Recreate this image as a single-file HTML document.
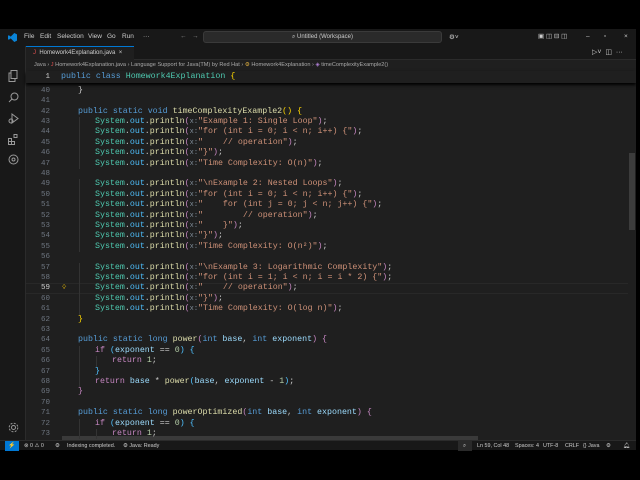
<!DOCTYPE html>
<html><head><meta charset="utf-8"><style>
*{margin:0;padding:0;box-sizing:border-box}
body{width:640px;height:480px;background:#000;overflow:hidden;position:relative;font-family:"Liberation Sans",sans-serif;color:#ccc}
.abs{position:absolute}
#win{position:absolute;left:0;top:29px;width:636px;height:421px;background:#1f1f1f;overflow:hidden}
#title{position:absolute;left:0;top:0;width:636px;height:17px;background:#181818;font-size:6.5px;color:#ccc}
#title span{position:absolute;top:4px}
#tabs{position:absolute;left:26px;top:17px;width:610px;height:14px;background:#181818;border-bottom:1px solid #2b2b2b}
#act{position:absolute;left:0;top:17px;width:26px;height:394px;background:#181818;border-right:1px solid #2b2b2b}
#crumb{position:absolute;left:26px;top:31px;width:610px;height:12px;font-size:5.6px;color:#a9a9a9}
.code{font-family:"Liberation Mono",monospace;font-size:8.3px;white-space:pre;position:absolute;left:0;height:10.4px;line-height:10.4px}
.ln{position:absolute;width:24px;left:26px;text-align:right;font-family:"Liberation Mono",monospace;font-size:7.5px;color:#6e7681;height:10.4px;line-height:10.4px}
.k{color:#569cd6}.f{color:#dcdcaa}.c{color:#4ec9b0}.s{color:#ce9178}.v{color:#9cdcfe}.o{color:#4fc1ff}.n{color:#b5cea8}.p{color:#c586c0}.h{color:#7f8c98;font-size:7px}.t{color:#ccc}.y{color:#ffd700}
#status{position:absolute;left:0;top:411px;width:636px;height:10px;background:#181818;border-top:1px solid #2b2b2b;font-size:5.4px;color:#ccc}
#status span{position:absolute;top:2px}
</style></head><body>
<div id="win">
<div id="title">
 <svg class="abs" style="left:8px;top:4px" width="9" height="9" viewBox="0 0 10 10"><path d="M7 0L3 4 1 2.5 0 3v4l1 .5L3 6l4 4 3-1.5v-7z" fill="#0a84d8"/></svg>
 <span style="left:24px">File</span><span style="left:40px">Edit</span><span style="left:57px">Selection</span><span style="left:88px">View</span><span style="left:107px">Go</span><span style="left:122px">Run</span><span style="left:143px">···</span>
 <span style="left:180px;color:#888">←</span><span style="left:192px;color:#888">→</span>
 <div class="abs" style="left:203px;top:2px;width:239px;height:12px;background:#2a2a2a;border:1px solid #3a3a3a;border-radius:3px;text-align:center;line-height:10px;font-size:6px">⌕ Untitled (Workspace)</div>
 <span style="left:449px">⚙˅</span>
 <span style="left:538px;top:3px">▣ ◫ ⊟ ◫</span>
 <span style="left:586px">–</span><span style="left:604px">▫</span><span style="left:624px">×</span>
</div>
<div id="act">
 <svg class="abs" style="left:8px;top:24px" width="11" height="12" viewBox="0 0 11 12" fill="none" stroke="#999" stroke-width="1"><rect x="3" y="0.5" width="6" height="8"/><path d="M3 3H1v8.5h6V8.5"/></svg>
 <svg class="abs" style="left:8px;top:46px" width="11" height="11" viewBox="0 0 11 11" fill="none" stroke="#999" stroke-width="1"><circle cx="6.5" cy="4.5" r="3.5"/><path d="M4 7L1 10"/></svg>
 <svg class="abs" style="left:8px;top:67px" width="11" height="11" viewBox="0 0 11 11" fill="none" stroke="#999" stroke-width="1"><path d="M4 1l6 4.5-6 4.5z"/><circle cx="3" cy="8" r="2"/></svg>
 <svg class="abs" style="left:8px;top:88px" width="11" height="11" viewBox="0 0 11 11" fill="none" stroke="#999" stroke-width="1"><rect x=".5" y="4.5" width="3" height="3"/><rect x=".5" y="7.5" width="3" height="3"/><rect x="3.5" y="7.5" width="3" height="3"/><rect x="6" y=".5" width="3" height="3"/></svg>
 <svg class="abs" style="left:8px;top:108px" width="11" height="11" viewBox="0 0 11 11" fill="none" stroke="#999" stroke-width="1"><circle cx="5.5" cy="5.5" r="4.5"/><circle cx="5.5" cy="5.5" r="1.5"/></svg>
 <svg class="abs" style="left:8px;top:376px" width="11" height="11" viewBox="0 0 11 11" fill="none" stroke="#999" stroke-width="1"><circle cx="5.5" cy="5.5" r="2"/><circle cx="5.5" cy="5.5" r="4.3" stroke-dasharray="2 1.4"/></svg>
</div>
<div id="tabs">
 <div class="abs" style="left:0;top:0;width:108px;height:14px;background:#1f1f1f;border-top:1px solid #0078d4;font-size:6px;line-height:13px;padding-left:7px"><span style="color:#e05050">J</span>&nbsp; Homework4Explanation.java &nbsp;×</div>
 <span class="abs" style="left:566px;top:2px;font-size:7px">▷˅ &nbsp;◫ &nbsp;···</span>
</div>
<div id="crumb"><span class="abs" style="left:8px;top:2px">Java › <span style="color:#e05050">J</span> Homework4Explanation.java › Language Support for Java(TM) by Red Hat › <span style="color:#e0b040">⚙</span> Homework4Explanation › <span style="color:#b180d7">◈</span> timeComplexityExample2()</span></div>
<div class="abs" style="left:26px;top:254.4px;width:602px;height:10.4px;border-top:1px solid #282828;border-bottom:1px solid #282828"></div>
<div class="abs" style="left:62px;top:407px;width:416px;height:4px;background:#3a3a3a"></div>
<div class="abs" style="left:629px;top:124px;width:6px;height:77px;background:#3c3c3c"></div>
<div id="codebox" class="abs" style="left:0;top:0;width:636px;height:411px"></div>
<div class="abs" style="left:26px;top:42px;width:610px;height:12px;background:#1f1f1f;box-shadow:0 2px 3px #000;z-index:2">
 <div class="ln" style="left:0;top:1px;color:#ccc">1</div>
 <div class="code" style="left:35px;top:1px"><span class="k">public class</span> <span class="c">Homework4Explanation</span> <span class="y">{</span></div>
</div>
</div>
<div id="status" style="position:absolute;left:0;top:440px">
 <div class="abs" style="left:5px;top:0;width:14px;height:10px;background:#0078d4;color:#fff;text-align:center;font-size:6px;line-height:10px">⚡</div>
 <span style="left:24px">⊗ 0 ⚠ 0</span><span style="left:55px">⚙</span><span style="left:67px">Indexing completed.</span><span style="left:123px">⚙ Java: Ready</span>
 <div class="abs" style="left:458px;top:0;width:14px;height:10px;background:#2a2a2a"></div><span style="left:463px">⌕</span>
 <span style="left:477px">Ln 59, Col 48</span><span style="left:515px">Spaces: 4</span><span style="left:543px">UTF-8</span><span style="left:565px">CRLF</span><span style="left:583px">{} Java</span><span style="left:606px">⚙</span><span style="left:623px">🔔︎</span>
</div>
<script>
const L={
40:[1,'<span class="t">}</span>'],41:[0,''],
42:[1,'<span class="k">public static void</span> <span class="f">timeComplexityExample2</span><span class="y">()</span> <span class="y">{</span>'],
43:[2,'S("Example 1: Single Loop")'],44:[2,'S("for (int i = 0; i &lt; n; i++) {")'],45:[2,'S("    // operation")'],46:[2,'S("}")'],47:[2,'S("Time Complexity: O(n)")'],48:[0,''],
49:[2,'S("\\nExample 2: Nested Loops")'],50:[2,'S("for (int i = 0; i &lt; n; i++) {")'],51:[2,'S("    for (int j = 0; j &lt; n; j++) {")'],52:[2,'S("        // operation")'],53:[2,'S("    }")'],54:[2,'S("}")'],55:[2,'S("Time Complexity: O(n²)")'],56:[0,''],
57:[2,'S("\\nExample 3: Logarithmic Complexity")'],58:[2,'S("for (int i = 1; i &lt; n; i = i * 2) {")'],59:[2,'S("    // operation")'],60:[2,'S("}")'],61:[2,'S("Time Complexity: O(log n)")'],
62:[1,'<span class="y">}</span>'],63:[0,''],
64:[1,'<span class="k">public static long</span> <span class="f">power</span><span class="p">(</span><span class="k">int</span> <span class="v">base</span>, <span class="k">int</span> <span class="v">exponent</span><span class="p">)</span> <span class="p">{</span>'],
65:[2,'<span class="p">if</span> <span class="o">(</span><span class="v">exponent</span> == <span class="n">0</span><span class="o">)</span> <span class="o">{</span>'],
66:[3,'<span class="p">return</span> <span class="n">1</span>;'],67:[2,'<span class="o">}</span>'],
68:[2,'<span class="p">return</span> <span class="v">base</span> * <span class="f">power</span><span class="o">(</span><span class="v">base</span>, <span class="v">exponent</span> - <span class="n">1</span><span class="o">)</span>;'],
69:[1,'<span class="p">}</span>'],70:[0,''],
71:[1,'<span class="k">public static long</span> <span class="f">powerOptimized</span><span class="p">(</span><span class="k">int</span> <span class="v">base</span>, <span class="k">int</span> <span class="v">exponent</span><span class="p">)</span> <span class="p">{</span>'],
72:[2,'<span class="p">if</span> <span class="o">(</span><span class="v">exponent</span> == <span class="n">0</span><span class="o">)</span> <span class="o">{</span>'],
73:[3,'<span class="p">return</span> <span class="n">1</span>;']
};
let h='';
for(let i=40;i<=73;i++){
 const top=(85.8-29+(i-40)*10.4).toFixed(1);
 let [ind,c]=L[i];
 c=c.replace(/^S\("(.*)"\)$/,(m,s)=>'<span class="c">System</span>.<span class="o">out</span>.<span class="f">println</span><span class="p">(</span><span class="h">x:</span><span class="s">"'+s+'"</span><span class="p">)</span>;');
 h+=`<div class="ln" style="top:${top}px;${i==59?'color:#ccc':''}">${i}</div>`;
 h+=`<div class="code" style="left:${61+ind*17}px;top:${top}px">${c}</div>`;
 for(let g=1;g<ind;g++)h+=`<div class="abs" style="left:${61+g*17+1}px;top:${top}px;width:1px;height:10.4px;background:#333"></div>`;
}
h+=`<div class="abs" style="left:62px;top:${(85.8-29+19*10.4+2).toFixed(1)}px;color:#ffcc00;font-size:6px">💡︎</div>`;
document.getElementById('codebox').innerHTML=h;
</script>
</body></html>
